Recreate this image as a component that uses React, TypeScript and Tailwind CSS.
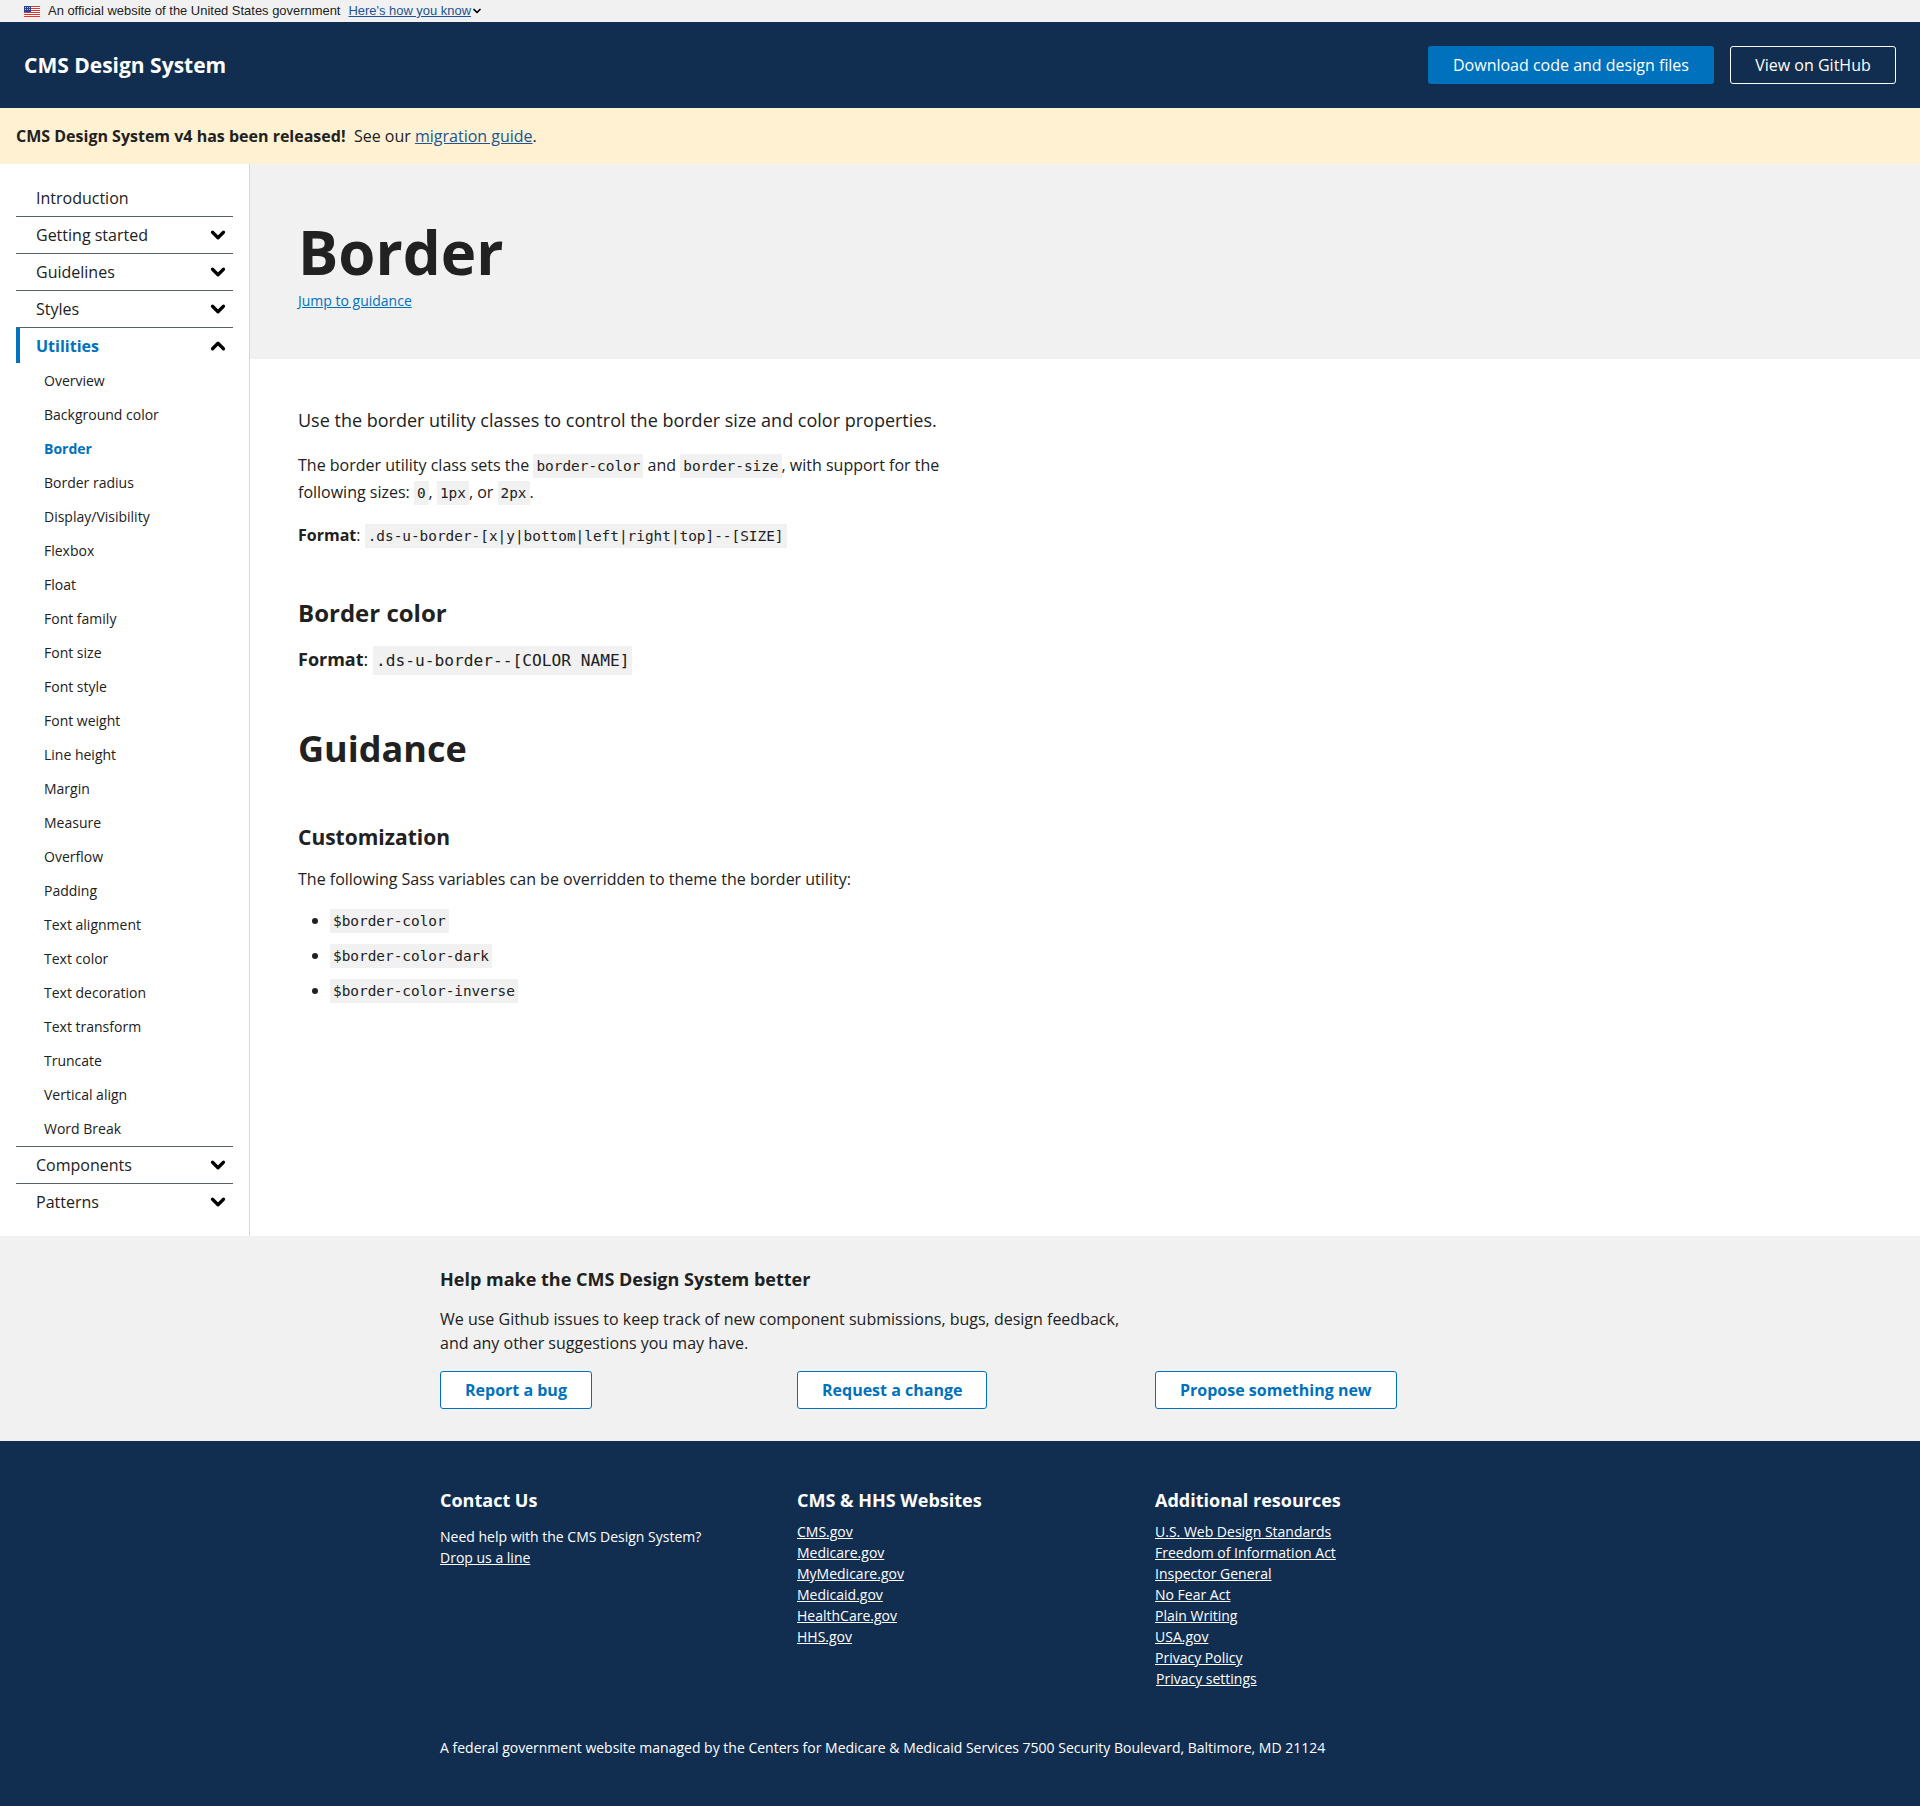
import { ChevronDown, ChevronUp } from 'lucide-react';

const utilityLinks = [
  'Overview',
  'Background color',
  'Border',
  'Border radius',
  'Display/Visibility',
  'Flexbox',
  'Float',
  'Font family',
  'Font size',
  'Font style',
  'Font weight',
  'Line height',
  'Margin',
  'Measure',
  'Overflow',
  'Padding',
  'Text alignment',
  'Text color',
  'Text decoration',
  'Text transform',
  'Truncate',
  'Vertical align',
  'Word Break'
];

const cmsLinks = ['CMS.gov', 'Medicare.gov', 'MyMedicare.gov', 'Medicaid.gov', 'HealthCare.gov', 'HHS.gov'];

const resourceLinks = [
  'U.S. Web Design Standards',
  'Freedom of Information Act',
  'Inspector General',
  'No Fear Act',
  'Plain Writing',
  'USA.gov',
  'Privacy Policy'
];

const Flag = () => (
  <svg width="16" height="11" viewBox="0 0 16 11" className="shrink-0">
    <rect width="16" height="11" fill="#fff" />
    {[0, 2, 4, 6, 8, 10].map((y) => (
      <rect key={y} y={y} width="16" height="1" fill="#d83933" />
    ))}
    <rect width="7" height="6" fill="#2e3f8f" />
    {[1, 3, 5].map((x) => [1, 3].map((y) => <rect key={`${x}-${y}`} x={x} y={y} width="1" height="1" fill="#b9bfe0" />))}
  </svg>
);

const Code = ({ children }: { children: string }) => (
  <code className="bg-[#f1f1f1] px-[3px] py-[4px] font-['DejaVu_Sans_Mono',monospace] text-[14.4px] leading-none">{children}</code>
);

const NavRow = ({ label, last, chevron = true }: { label: string; last?: boolean; chevron?: boolean }) => (
  <div className={`flex items-center justify-between pl-[20px] pr-[4px] text-[16px] text-[#212121] ${last ? 'h-[36px]' : 'h-[37px] border-b border-[#5b616b]'}`}>
    <span>{label}</span>
    {chevron && <ChevronDown className="h-[22px] w-[22px] text-black" strokeWidth={3.5} />}
  </div>
);

const Sidebar = () => (
  <nav className="w-[250px] shrink-0 border-r border-[#d6d7d9] pl-[16px] pr-[16px] pt-[16px]">
    <NavRow label="Introduction" chevron={false} />
    <NavRow label="Getting started" />
    <NavRow label="Guidelines" />
    <NavRow label="Styles" />
    <div className="flex h-[35px] items-center justify-between border-l-[4px] border-[#0071bc] pl-[16px] pr-[4px] text-[16px] font-bold text-[#0071bc]">
      <span>Utilities</span>
      <ChevronUp className="h-[22px] w-[22px] text-black" strokeWidth={3.5} />
    </div>
    <ul className="border-b border-[#5b616b] pb-[1px]">
      {utilityLinks.map((link) => (
        <li
          key={link}
          className={`flex h-[34px] items-center pl-[28px] text-[14px] ${link === 'Border' ? 'font-bold text-[#0071bc]' : 'text-[#212121]'}`}
        >
          {link}
        </li>
      ))}
    </ul>
    <NavRow label="Components" />
    <NavRow label="Patterns" last />
  </nav>
);

const Content = () => (
  <main className="flex-1">
    <div className="h-[195px] bg-[#f1f1f1] pl-[48px] pt-[52px]">
      <h1 className="text-[60px] font-bold leading-[72px] text-[#212121]">Border</h1>
      <a className="mt-[1px] block text-[14px] leading-[24px] text-[#0071bc] underline">Jump to guidance</a>
    </div>
    <div className="pl-[48px] pt-[48px] text-[#212121]">
      <p className="text-[18px] leading-[27px]">Use the border utility classes to control the border size and color properties.</p>
      <p className="mt-[18px] w-[680px] text-[16px] leading-[27px]">
        The border utility class sets the <Code>border-color</Code> and <Code>border-size</Code>, with support for the following sizes:{' '}
        <Code>0</Code>, <Code>1px</Code>, or <Code>2px</Code>.
      </p>
      <p className="mt-[16px] text-[16px] leading-[27px]">
        <strong>Format</strong>: <Code>.ds-u-border-[x|y|bottom|left|right|top]--[SIZE]</Code>
      </p>
      <h2 className="mt-[48px] text-[24px] font-bold leading-[32px]">Border color</h2>
      <p className="mt-[14px] text-[18px] leading-[32px]">
        <strong>Format</strong>:{' '}
        <code className="bg-[#f1f1f1] px-[3px] py-[5px] font-['DejaVu_Sans_Mono',monospace] text-[16.2px] leading-none">.ds-u-border--[COLOR NAME]</code>
      </p>
      <h2 className="mt-[50px] text-[36px] font-bold leading-[48px]">Guidance</h2>
      <h3 className="mt-[48px] text-[21px] font-bold leading-[32px]">Customization</h3>
      <p className="mt-[13px] text-[16px] leading-[27px]">The following Sass variables can be overridden to theme the border utility:</p>
      <ul className="mt-[10px] list-disc pl-[32px] text-[16px]">
        {['$border-color', '$border-color-dark', '$border-color-inverse'].map((v) => (
          <li key={v} className="h-[35px] leading-[35px]">
            <Code>{v}</Code>
          </li>
        ))}
      </ul>
    </div>
  </main>
);

const OutlineButton = ({ label }: { label: string }) => (
  <a className="flex h-[38px] w-fit items-center rounded-[3px] border border-[#0071bc] bg-white px-[24px] text-[16px] font-bold text-[#0071bc]">
    {label}
  </a>
);

export default function App() {
  return (
    <div className="font-['Open_Sans',sans-serif]">
      <div className="flex h-[22px] items-center gap-[8px] bg-[#f1f1f1] pl-[24px] font-['Liberation_Sans',sans-serif] text-[12.95px] text-[#212121]">
        <Flag />
        <span>An official website of the United States government</span>
        <span className="flex items-center">
          <a className="text-[#205493] underline">Here's how you know</a>
          <ChevronDown className="h-[12px] w-[12px] text-black" strokeWidth={3.5} />
        </span>
      </div>

      <header className="flex h-[86px] items-center justify-between bg-[#112e51] pl-[24px] pr-[24px]">
        <span className="pt-[2px] text-[21px] font-bold text-white">CMS Design System</span>
        <div className="flex items-center gap-[16px]">
          <a className="flex h-[38px] w-[286px] items-center justify-center rounded-[3px] bg-[#0071bc] text-[16px] text-white">Download code and design files</a>
          <a className="flex h-[38px] w-[166px] items-center justify-center rounded-[3px] border border-white text-[16px] text-white">View on GitHub</a>
        </div>
      </header>

      <div className="flex h-[56px] items-center bg-[#fff1d2] pl-[16px] text-[16px] text-[#212121]">
        <strong>CMS Design System v4 has been released!</strong>
        <span className="ml-[8.5px]">
          See our <a className="text-[#205493] underline">migration guide</a>.
        </span>
      </div>

      <div className="flex h-[1072px]">
        <Sidebar />
        <Content />
      </div>

      <section className="h-[205px] bg-[#f1f1f1] pt-[30px] text-[#212121]">
        <div className="mx-auto w-[1040px]">
          <h3 className="text-[18px] font-bold leading-[27px]">Help make the CMS Design System better</h3>
          <p className="mt-[14px] w-[700px] text-[16px] leading-[24px]">
            We use Github issues to keep track of new component submissions, bugs, design feedback, and any other suggestions you may have.
          </p>
          <div className="mt-[16px] grid grid-cols-[357px_358px_1fr]">
            <OutlineButton label="Report a bug" />
            <OutlineButton label="Request a change" />
            <OutlineButton label="Propose something new" />
          </div>
        </div>
      </section>

      <footer className="h-[365px] bg-[#112e51] pt-[46px] text-white">
        <div className="mx-auto w-[1040px]">
          <div className="grid h-[215px] grid-cols-[357px_358px_1fr]">
            <div>
              <h4 className="text-[18px] font-bold leading-[27px]">Contact Us</h4>
              <p className="mt-[12px] text-[14px] leading-[21px]">
                Need help with the CMS Design System?
                <br />
                <a className="underline">Drop us a line</a>
              </p>
            </div>
            <div>
              <h4 className="text-[18px] font-bold leading-[27px]">CMS &amp; HHS Websites</h4>
              <ul className="mt-[7px] text-[14px] leading-[21px]">
                {cmsLinks.map((l) => (
                  <li key={l}>
                    <a className="underline">{l}</a>
                  </li>
                ))}
              </ul>
            </div>
            <div>
              <h4 className="text-[18px] font-bold leading-[27px]">Additional resources</h4>
              <ul className="mt-[7px] text-[14px] leading-[21px]">
                {resourceLinks.map((l) => (
                  <li key={l}>
                    <a className="underline">{l}</a>
                  </li>
                ))}
                <li className="pl-[1px]">
                  <a className="underline">Privacy settings</a>
                </li>
              </ul>
            </div>
          </div>
          <p className="mt-[35px] text-[14px] leading-[21px]">
            A federal government website managed by the Centers for Medicare &amp; Medicaid Services 7500 Security Boulevard, Baltimore, MD 21124
          </p>
        </div>
      </footer>
    </div>
  );
}
